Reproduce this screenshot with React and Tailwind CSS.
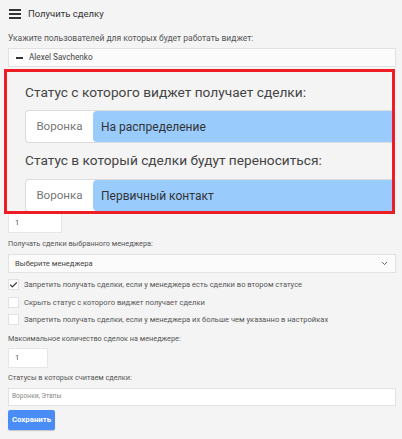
import { Check, ChevronDown } from 'lucide-react'

function Checkbox({ checked, label }) {
  return (
    <label className="flex h-[17.5px] items-center gap-[5px]">
      <span className="flex h-[11px] w-[11px] items-center justify-center border border-[#e2e2e2] bg-white">
        {checked && <Check size={10} strokeWidth={3} className="text-[#333]" />}
      </span>
      <span className="text-[7.55px] text-[#555]">{label}</span>
    </label>
  )
}

function Label({ children, className = '' }) {
  return <p className={`text-[7.3px] leading-[12px] text-[#555] ${className}`}>{children}</p>
}

function ZoomGroup({ value }) {
  return (
    <div className="flex h-[33px] rounded-l-[4px] border border-r-0 border-[#dcdcdc] bg-white">
      <div className="flex w-[67px] items-center justify-center text-[11.6px] text-[#777]">Воронка</div>
      <div className="flex flex-1 items-center rounded-l-[4px] bg-[#99cbfd] pl-[8px] text-[12px] text-[#333]">
        {value}
      </div>
    </div>
  )
}

export default function App() {
  return (
    <div className="relative min-h-[439px] w-[402px] bg-[#f4f4f4] font-['Roboto',sans-serif]">
      <div className="pl-[8px] pr-[6px]">
        <div className="flex h-[28px] items-center gap-[7px] pl-[1px]">
          <div className="flex w-[12px] flex-col gap-[2px]">
            <span className="h-[2px] bg-[#333]" />
            <span className="h-[2px] bg-[#333]" />
            <span className="h-[2px] bg-[#333]" />
          </div>
          <span className="text-[9.5px] text-[#333]">Получить сделку</span>
        </div>

        <p className="mt-[4px] text-[8.5px] leading-[12px] text-[#555]">Укажите пользователей для которых будет работать виджет:</p>
        <div className="mt-[4px] flex h-[19px] items-center gap-[5px] border border-[#e2e2e2] bg-[#fbfbfb] pl-[5px]">
          <span className="flex h-[10px] w-[10px] items-center justify-center bg-white">
            <span className="h-[2px] w-[7px] bg-[#333]" />
          </span>
          <span className="text-[8.2px] text-[#444]">Alexel Savchenko</span>
        </div>

        <div className="h-[146px] pt-[4px]">
          <Label>Статус с которого виджет получает сделки:</Label>
        </div>

        <div className="flex h-[20px] w-[54px] items-center border border-[#e6e6e6] bg-white pl-[6px] text-[7.5px] text-[#555]">1</div>

        <Label className="mt-[5px]">Получать сделки выбранного менеджера:</Label>
        <div className="mt-[4px] flex h-[19px] items-center justify-between border border-[#e2e2e2] bg-[#fbfbfb] pl-[6px] pr-[6px]">
          <span className="text-[7.6px] text-[#444]">Выберите менеджера</span>
          <ChevronDown size={9} strokeWidth={2.5} className="text-[#555]" />
        </div>

        <div className="mt-[3px] flex flex-col">
          <Checkbox checked label="Запретить получать сделки, если у менеджера есть сделки во втором статусе" />
          <Checkbox label="Скрыть статус с которого виджет получает сделки" />
          <Checkbox label="Запретить получать сделки, если у менеджера их больше чем указанно в настройках" />
        </div>

        <Label className="mt-[4px]">Максимальное количество сделок на менеджере:</Label>
        <div className="mt-[3px] flex h-[20px] w-[40px] items-center border border-[#e6e6e6] bg-white pl-[6px] text-[7.5px] text-[#555]">1</div>

        <Label className="mt-[4.5px]">Статусы в которых считаем сделки:</Label>
        <div className="mt-[4px] flex h-[18px] items-center border border-[#e2e2e2] bg-white pl-[3px] text-[6.6px] text-[#888]">Воронки, Этапы</div>

        <button className="mt-[4px] flex h-[20px] w-[47px] items-center justify-center rounded-[2px] bg-[#4a8cf6] text-[7.8px] font-bold text-white shadow-[0_1px_1px_rgba(0,0,0,0.2)]">
          Сохранить
        </button>
      </div>

      <div className="absolute left-[4px] top-[69px] h-[145px] w-[391px] overflow-hidden border-[3px] border-[#ee1c25] bg-[#f4f4f4] pl-[18px]">
        <p className="mt-[10px] text-[13.7px] leading-[20px] text-[#444]">Статус с которого виджет получает сделки:</p>
        <div className="mt-[8px]">
          <ZoomGroup value="На распределение" />
        </div>
        <p className="mt-[7px] text-[13.7px] leading-[20px] text-[#444]">Статус в который сделки будут переноситься:</p>
        <div className="mt-[9px]">
          <ZoomGroup value="Первичный контакт" />
        </div>
      </div>
    </div>
  )
}
